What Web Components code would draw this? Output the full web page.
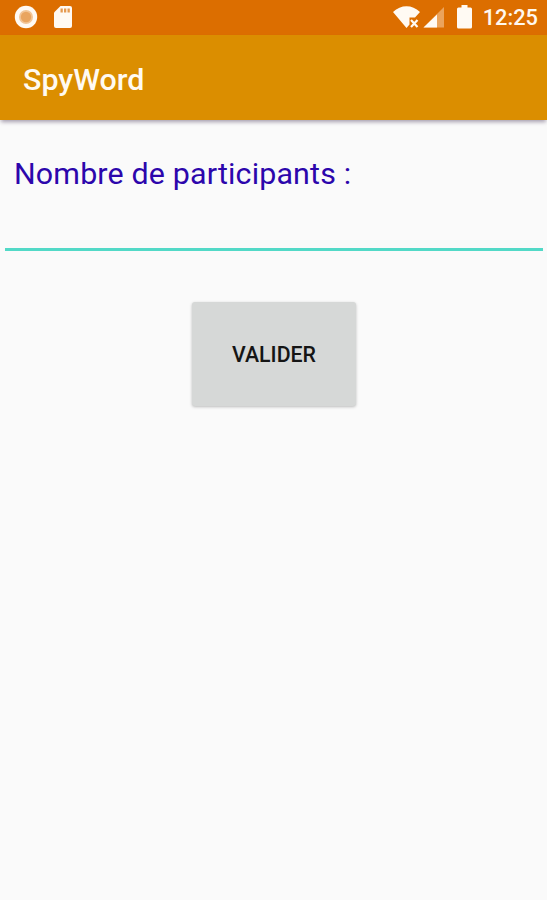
<!DOCTYPE html>
<html lang="fr">
<head>
<meta charset="utf-8">
<title>SpyWord</title>
<style>
    html, body {
        margin: 0;
        height: 100%;
        overflow: hidden;
        background: #fafafa;
        font-family: Roboto, "Liberation Sans", sans-serif;
    }
</style>
</head>
<body>
<app-screen>
    <status-bar slot="top" time="12:25"></status-bar>
    <app-bar slot="top">SpyWord</app-bar>
    <number-field label="Nombre de participants :"></number-field>
    <raised-button>VALIDER</raised-button>
</app-screen>

<script>
class AppScreen extends HTMLElement {
    constructor() {
        super();
        this.attachShadow({ mode: "open" }).innerHTML = `
            <style>
                :host {
                    display: flex;
                    flex-direction: column;
                    height: 100vh;
                    background: #fafafa;
                }
                main {
                    display: flex;
                    flex-direction: column;
                    align-items: center;
                    gap: 51px;
                    padding: 36px 4px 0 5px;
                }
            </style>
            <slot name="top"></slot>
            <main><slot></slot></main>
        `;
    }
}
customElements.define("app-screen", AppScreen);

class StatusBar extends HTMLElement {
    constructor() {
        super();
        this.attachShadow({ mode: "open" });
    }

    connectedCallback() {
        const time = this.getAttribute("time") || "";

        this.shadowRoot.innerHTML = `
            <style>
                :host {
                    display: flex;
                    align-items: center;
                    justify-content: space-between;
                    box-sizing: border-box;
                    height: 35px;
                    padding: 0 9px 1px 14px;
                    background: #dc6e00;
                    color: #fff8ef;
                }
                div {
                    display: flex;
                    align-items: center;
                }
                svg {
                    display: block;
                    fill: #fffaf3;
                }
                .left { gap: 16px; }
                .signal { margin-left: 2px; }
                .battery { margin: 0 11px 0 12px; }
                .time {
                    font-size: 21.8px;
                    font-weight: 500;
                    line-height: 34px;
                    padding-top: 1px;
                }
            </style>
            <div class="left">
                <svg width="24" height="24" viewBox="0 0 24 24">
                    <circle cx="12" cy="12" r="11.2"/>
                    <circle cx="12" cy="12" r="7" fill="#f2c597"/>
                    <circle cx="12" cy="12" r="5.2" fill="#e9a560"/>
                </svg>
                <svg width="18" height="24" viewBox="0 0 18 24">
                    <path d="M6.500 1H16a2 2 0 0 1 2 2v18a2 2 0 0 1-2 2H2a2 2 0 0 1-2-2V7.500z"/>
                    <path fill="#e59a50" d="M6.500 3.500h2.300v4h-2.300zM10 3.500h2.300v4h-2.300zM13.500 3.500h2.300v4h-2.300z"/>
                </svg>
            </div>
            <div>
                <svg width="28" height="24" viewBox="0 0 28 24">
                    <path d="M0 7C8-.6 19-.6 27 7L22 12.500H16.500V19.500L13.500 23z"/>
                    <path fill="none" stroke="#fffaf3" stroke-width="2.200" d="M18 15l6.500 7M24.500 15l-6.500 7"/>
                </svg>
                <svg class="signal" width="22" height="24" viewBox="0 0 22 24">
                    <path fill="#eba45c" d="M21 2V22.500H.5z"/>
                    <path d="M14 9.500V22.500H.5z"/>
                </svg>
                <svg class="battery" width="15" height="24" viewBox="0 0 15 24">
                    <path d="M4.500 0h6v2.500H13.500a1.500 1.500 0 0 1 1.500 1.500v18a1.500 1.500 0 0 1-1.500 1.500H1.500A1.500 1.500 0 0 1 0 22V4a1.500 1.500 0 0 1 1.500-1.500H4.500z"/>
                </svg>
                <span class="time">${time}</span>
            </div>
        `;
    }
}
customElements.define("status-bar", StatusBar);

class AppBar extends HTMLElement {
    constructor() {
        super();
        this.attachShadow({ mode: "open" }).innerHTML = `
            <style>
                :host {
                    display: flex;
                    align-items: center;
                    box-sizing: border-box;
                    height: 85px;
                    padding: 4px 23px 0;
                    background: #db8e00;
                    box-shadow: 0 3px 4px -1px rgba(40, 20, 60, 0.4);
                    color: #fffaf2;
                    font-size: 30.4px;
                    font-weight: 500;
                }
            </style>
            <slot></slot>
        `;
    }
}
customElements.define("app-bar", AppBar);

class NumberField extends HTMLElement {
    constructor() {
        super();
        this.attachShadow({ mode: "open" });
    }

    connectedCallback() {
        const label = this.getAttribute("label") || "";

        this.shadowRoot.innerHTML = `
            <style>
                :host {
                    display: flex;
                    flex-direction: column;
                    align-self: stretch;
                }
                label {
                    padding-left: 9px;
                    color: #2c06ac;
                    font-size: 30.4px;
                    line-height: 36px;
                    letter-spacing: 0.16px;
                }
                input {
                    box-sizing: border-box;
                    width: 100%;
                    height: 59px;
                    margin: 0;
                    padding: 0 6px;
                    border: 0;
                    border-bottom: 3px solid #52d9c7;
                    border-radius: 0;
                    outline: 0;
                    background: transparent;
                    font: inherit;
                    font-size: 27px;
                }
            </style>
            <label for="count">${label}</label>
            <input id="count" type="text" inputmode="numeric">
        `;
    }
}
customElements.define("number-field", NumberField);

class RaisedButton extends HTMLElement {
    constructor() {
        super();
        this.attachShadow({ mode: "open" }).innerHTML = `
            <style>
                :host {
                    display: block;
                }
                button {
                    display: block;
                    width: 164px;
                    height: 104px;
                    padding: 0;
                    border: 0;
                    border-radius: 3px;
                    background: #d6d8d7;
                    box-shadow: 0 1px 3px rgba(0, 0, 0, 0.25);
                    color: #151515;
                    font: inherit;
                    font-size: 21.3px;
                    font-weight: 500;
                }
            </style>
            <button type="button"><slot></slot></button>
        `;
    }
}
customElements.define("raised-button", RaisedButton);
</script>
</body>
</html>
